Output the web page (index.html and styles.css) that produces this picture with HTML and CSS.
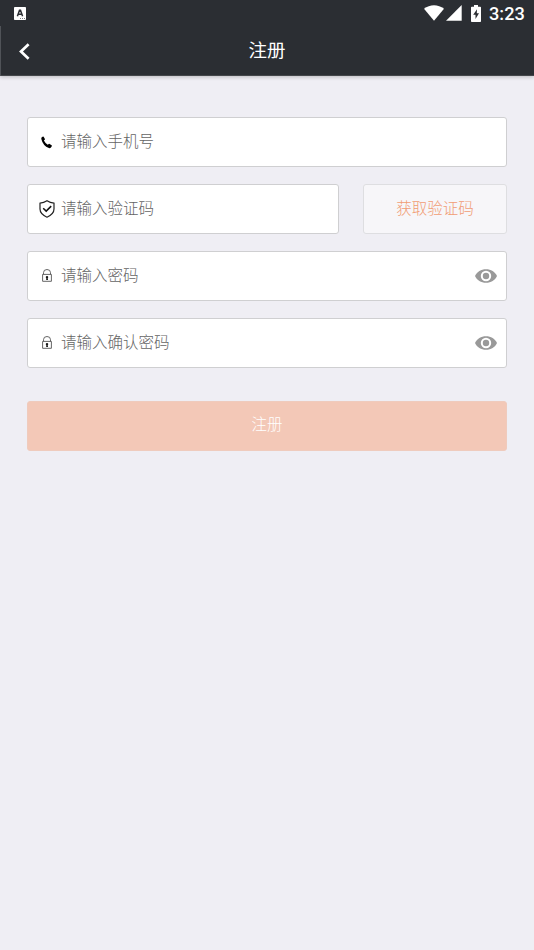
FILE: index.html
```html
<!DOCTYPE html>
<html lang="zh-CN">
<head>
<meta charset="utf-8">
<title>注册</title>
<link rel="stylesheet" href="styles.css">
</head>
<body>
<svg class="defs" width="0" height="0">
  <symbol id="lock" viewBox="0 0 10 13">
    <path d="M.6 5.400h8.800v6.900H.6z M1.500 5.300V3.700a3.500 3.200 0 0 1 7 0v1.600" fill="none" stroke="#555" stroke-width=".9"/>
    <path d="M5 6.900a1.200 1.200 0 0 1 .7 2.200l.3 1.800H4.200l.1-1.800A1.200 1.200 0 0 1 5 6.900z" fill="#111"/>
  </symbol>
  <symbol id="eye" viewBox="0 0 22 14">
    <path d="M0 7C2 2.600 6 .2 11 .2S20 2.600 22 7c-2 4.400-6 6.800-11 6.800S2 11.400 0 7z" fill="#999"/>
    <circle cx="11" cy="7" r="4.200" fill="#999" stroke="#fff" stroke-width="2"/>
  </symbol>
</svg>
<header class="header">
  <div class="status">
    <svg class="app-badge" width="12" height="13" viewBox="0 0 12 13"><rect width="12" height="13" rx=".8" fill="#fff"/><path d="M3.400 9.200 5.500 3.200h1L8.600 9.200M4.200 7.300h3.600" fill="none" stroke="#2b2e33" stroke-width="1.500"/><path d="M6 11.500h1m1 0h1m1 0h1" stroke="#2b2e33" stroke-width=".6"/></svg>
    <svg class="wifi" width="20" height="16" viewBox="0 0 20 16"><path d="M0 3.800C5.800-.9 14.200-.9 20 3.800L10 15.800z" fill="#fff"/></svg>
    <svg class="signal" width="16" height="16" viewBox="0 0 16 16"><path d="M15.700 0v15.800H0z" fill="#fff"/></svg>
    <svg class="battery" width="10" height="17" viewBox="0 0 10 17"><path d="M3 0h4v1.700h2.200q.8 0 .8.800v13.700q0 .8-.8.800H.8q-.8 0-.8-.8V2.500q0-.8.8-.8H3z" fill="#fff"/><path d="M6 4.200 2.200 9.800h2.300v4.200L8 8.200H5.800z" fill="#2b2e33"/></svg>
    <time class="clock">3:23</time>
  </div>
  <nav class="navbar">
    <svg class="back" width="11" height="17" viewBox="0 0 11 17"><path d="M9.600 1.300 2 8.500l7.600 7.200" fill="none" stroke="#fff" stroke-width="2.700"/></svg>
    <h1 class="title">注册</h1>
  </nav>
</header>
<main class="form">
  <div class="field">
    <span class="icon"><svg width="12" height="13" viewBox="0 0 12 13"><path d="M.8 1.200 2 .6q.5-.2.8.3l1.100 2q.2.500-.2.900l-.8.700q1.300 2.700 3.900 4.300l.9-.7q.4-.4.9-.1l2 1.300q.5.400.2.900l-.9 1.300q-.7.900-2 .6Q2 9.900.4 3.300 0 1.900.8 1.200z" fill="#000"/></svg></span>
    <span class="placeholder">请输入手机号</span>
  </div>
  <div class="row">
    <div class="field">
      <span class="icon"><svg width="16" height="18" viewBox="0 0 16 18"><path d="M8 .8Q4.800 3 1 3.200V9q0 5 7 8.200 7-3.200 7-8.200V3.200Q11.200 3 8 .8z" fill="none" stroke="#222" stroke-width="1.200"/><path d="m4.200 8.300 3 2.800 5-5" fill="none" stroke="#111" stroke-width="1.500"/></svg></span>
      <span class="placeholder">请输入验证码</span>
    </div>
    <div class="code">获取验证码</div>
  </div>
  <div class="field">
    <span class="icon lock"><svg width="10" height="13"><use href="#lock"/></svg></span>
    <span class="placeholder">请输入密码</span>
    <svg class="eye" width="22" height="14"><use href="#eye"/></svg>
  </div>
  <div class="field">
    <span class="icon lock"><svg width="10" height="13"><use href="#lock"/></svg></span>
    <span class="placeholder">请输入确认密码</span>
    <svg class="eye" width="22" height="14"><use href="#eye"/></svg>
  </div>
  <div class="submit">注册</div>
</main>
</body>
</html>
```
FILE: styles.css
```css
* { box-sizing: border-box; }
body {
  margin: 0;
  min-height: 950px;
  background: #efeef4;
  font-family: "Noto Sans CJK SC", sans-serif;
  font-size: 15.5px;
  font-weight: 300;
}
svg { display: block; flex: none; }
.defs { display: none; }
.header {
  height: 76px;
  background: #2b2e33;
  border-bottom: 1px solid #44474b;
  box-shadow: 0 1px 4px rgba(0, 0, 0, .22);
  color: #fff;
}
.status {
  height: 26px;
  padding: 0 9px 0 14px;
  display: flex;
  align-items: center;
}
.wifi { margin-left: auto; }
.signal { margin-left: 2px; }
.battery { margin-left: 9px; }
.clock {
  width: 36px;
  margin-left: 8px;
  padding-top: 2px;
  font: 500 18.2px/24px Roboto, sans-serif;
  white-space: nowrap;
}
.navbar {
  height: 50px;
  display: grid;
  grid-template-columns: 60px 1fr 60px;
  align-items: center;
  border-left: 1px solid #505358;
}
.back { margin: 1px 0 0 18px; }
.title {
  margin: 0 1px 0 0;
  text-align: center;
  font-size: 18.5px;
  font-weight: 400;
  line-height: 46px;
  padding-bottom: 4px;
}
.form {
  padding: 41px 27px 0;
  display: flex;
  flex-direction: column;
  gap: 17px;
}
.field, .code {
  height: 50px;
  border: 1px solid #cfcfd1;
  border-radius: 3px;
  background: #fff;
  display: flex;
  align-items: center;
}
.field { padding: 0 9px 0 11px; color: #646464; }
.row { display: grid; grid-template-columns: 312px 144px; gap: 24px; }
.icon { width: 16px; margin-right: 6px; display: flex; justify-content: center; }
.lock { padding-bottom: 2px; }
.placeholder { line-height: 44px; padding-bottom: 4px; }
.eye { margin: 0 0 1px auto; }
.code {
  justify-content: center;
  padding-bottom: 4px;
  background: #f7f6f9;
  border-color: #dedee1;
  color: #f19c74;
}
.submit {
  height: 50px;
  margin-top: 16px;
  border: 1px solid #efcbbd;
  border-radius: 3px;
  background: #f3c8b7;
  color: #fff;
  line-height: 43px;
  text-align: center;
}
```
